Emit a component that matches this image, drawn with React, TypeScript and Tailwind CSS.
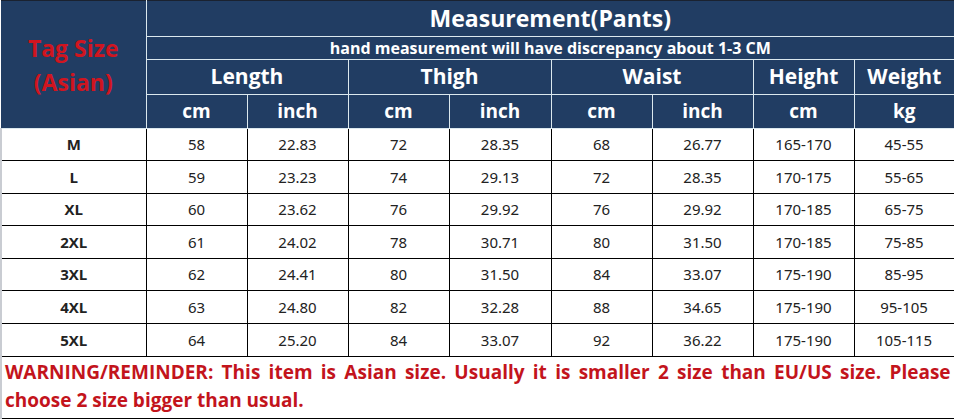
import React from 'react';

const rows = [
  ['M', '58', '22.83', '72', '28.35', '68', '26.77', '165-170', '45-55'],
  ['L', '59', '23.23', '74', '29.13', '72', '28.35', '170-175', '55-65'],
  ['XL', '60', '23.62', '76', '29.92', '76', '29.92', '170-185', '65-75'],
  ['2XL', '61', '24.02', '78', '30.71', '80', '31.50', '170-185', '75-85'],
  ['3XL', '62', '24.41', '80', '31.50', '84', '33.07', '175-190', '85-95'],
  ['4XL', '63', '24.80', '82', '32.28', '88', '34.65', '175-190', '95-105'],
  ['5XL', '64', '25.20', '84', '33.07', '92', '36.22', '175-190', '105-115'],
];

const hd = 'border-[1.5px] border-[#dbe8ee] text-white font-bold text-center p-0';
const bd = 'border-[1.5px] border-black text-center p-0 h-[32.6px] text-[15px] text-[#222]';

export default function App() {
  return (
    <div className="w-[954px] h-[419px] bg-white overflow-hidden" style={{ fontFamily: '"Open Sans", "Noto Sans", sans-serif' }}>
      <table className="table-fixed border-collapse w-[953px] border-t border-t-[#1a2230]">
        <colgroup>
          <col className="w-[145px]" />
          <col className="w-[101px]" /><col className="w-[101px]" />
          <col className="w-[101px]" /><col className="w-[102px]" />
          <col className="w-[101px]" /><col className="w-[101px]" />
          <col className="w-[101px]" /><col className="w-[100px]" />
        </colgroup>
        <thead className="bg-[#213d63]">
          <tr className="h-[35px]">
            <td rowSpan={4} className={`${hd} border-l-0 border-t-0`}>
              <div className="text-[#d0151f] text-[23px] leading-[34px] pt-[2px]">Tag Size<br />(Asian)</div>
            </td>
            <td colSpan={8} className={`${hd} text-[23px] border-t-0 border-r-0`}>Measurement(Pants)</td>
          </tr>
          <tr className="h-[23px]">
            <td colSpan={8} className={`${hd} text-[16px] leading-[20px] border-r-0`}>hand measurement will have discrepancy about 1-3 CM</td>
          </tr>
          <tr className="h-[35px] text-[21px]">
            <td colSpan={2} className={hd}>Length</td>
            <td colSpan={2} className={hd}>Thigh</td>
            <td colSpan={2} className={hd}>Waist</td>
            <td className={hd}>Height</td>
            <td className={`${hd} border-r-0`}>Weight</td>
          </tr>
          <tr className="h-[34px] text-[19px]">
            <td className={hd}>cm</td><td className={hd}>inch</td>
            <td className={hd}>cm</td><td className={hd}>inch</td>
            <td className={hd}>cm</td><td className={hd}>inch</td>
            <td className={hd}>cm</td>
            <td className={`${hd} border-r-0`}>kg</td>
          </tr>
        </thead>
        <tbody>
          {rows.map(r => (
            <tr key={r[0]}>
              {r.map((c, i) => (
                <td key={i} className={`${bd} ${i === 0 ? 'font-bold text-[#111] border-l-[2px] border-l-[#c9ccd2]' : ''}`} style={{ fontFamily: i === 0 ? undefined : '"Noto Sans", sans-serif' }}>{c}</td>
              ))}
            </tr>
          ))}
          <tr>
            <td colSpan={9} className="border-[1.5px] border-black border-l-[2px] border-l-[#c9ccd2] h-[62px] align-top px-[3px] pt-[1px]">
              <div className="text-[#c3141c] font-bold text-[19px] leading-[28px]">
                <div className="text-justify [text-align-last:justify]">WARNING/REMINDER: This item is Asian size. Usually it is smaller 2 size than EU/US size. Please</div>
                <div>choose 2 size bigger than usual.</div>
              </div>
            </td>
          </tr>
        </tbody>
      </table>
    </div>
  );
}
